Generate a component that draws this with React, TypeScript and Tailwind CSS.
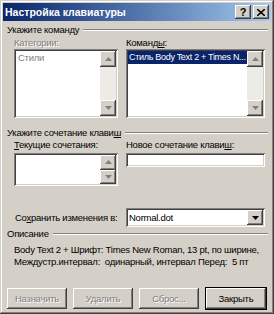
import React from "react";

const FONT = { fontFamily: '"Liberation Sans", Arial, sans-serif' };

const sunken =
  "bg-white shadow-[inset_1px_1px_0_#808080,inset_-1px_-1px_0_#ffffff,inset_2px_2px_0_#404040,inset_-2px_-2px_0_#d4d0c8]";
const raised =
  "bg-[#d4d0c8] shadow-[inset_-1px_-1px_0_#404040,inset_1px_1px_0_#ffffff,inset_-2px_-2px_0_#808080,inset_2px_2px_0_#d4d0c8]";

function Arrow({ down }: { down?: boolean }) {
  return (
    <div className={`w-4 h-4 flex items-center justify-center ${raised}`}>
      <svg width="7" height="4" viewBox="0 0 7 4">
        {down ? (
          <polygon points="0,0 7,0 3.5,4" fill="#808080" />
        ) : (
          <polygon points="0,4 7,4 3.5,0" fill="#808080" />
        )}
      </svg>
    </div>
  );
}

function ScrollBar() {
  return (
    <div className="w-4 flex flex-col justify-between bg-[#ecebe6]">
      <Arrow />
      <Arrow down />
    </div>
  );
}

function Group({ title }: { title: React.ReactNode }) {
  return (
    <div className="flex items-center h-3 gap-1">
      <span className="whitespace-nowrap">{title}</span>
      <div className="flex-1 border-t border-t-[#808080] border-b border-b-white" />
    </div>
  );
}

function Btn({ label, disabled, primary }: { label: string; disabled?: boolean; primary?: boolean }) {
  return (
    <div
      className={`w-[60px] h-[21px] flex items-center justify-center ${
        primary ? "outline outline-1 outline-black" : ""
      } ${raised} ${disabled ? "text-[#808080] [text-shadow:1px_1px_0_#ffffff]" : "text-black"}`}
    >
      {label}
    </div>
  );
}

export default function App() {
  return (
    <div
      style={FONT}
      className="w-[274px] h-[314px] overflow-hidden bg-[#d4d0c8] p-[3px] text-[9.5px] tracking-[-0.25px] leading-3 text-black shadow-[inset_-1px_-1px_0_#404040,inset_1px_1px_0_#d4d0c8,inset_-2px_-2px_0_#808080,inset_2px_2px_0_#ffffff] flex flex-col"
    >
      {/* Title bar */}
      <div className="h-[18px] shrink-0 bg-linear-to-r from-[#0a246a] to-[#a6caf0] flex items-center px-[2px]">
        <span className="flex-1 text-white font-bold text-[10.5px] tracking-normal">Настройка клавиатуры</span>
        <div className={`w-4 h-[14px] flex items-center justify-center font-bold text-[11px] ${raised}`}>?</div>
        <div className={`w-4 h-[14px] ml-[2px] flex items-center justify-center ${raised}`}>
          <svg width="8" height="7" viewBox="0 0 8 7">
            <path d="M0 0 L8 7 M8 0 L0 7" stroke="#000" strokeWidth="1.6" />
          </svg>
        </div>
      </div>

      <div className="flex flex-col pl-1 pr-[3px]">
        <div className="mt-[3px]">
          <Group title="Укажите команду" />
        </div>

        <div className="flex pl-[7px]">
          <div className="w-[104px] flex flex-col">
            <span className="h-3 mt-[1px] text-[#808080] [text-shadow:1px_1px_0_#ffffff]">Категории:</span>
            <div className={`h-[69px] flex p-[2px] ${sunken}`}>
              <div className="flex-1 pl-[2px] pt-[1px] text-[#808080]">Стили</div>
              <ScrollBar />
            </div>
          </div>
          <div className="w-[139px] ml-[8px] flex flex-col">
            <span className="h-3 mt-[1px]">
              Команд<span className="underline">ы</span>:
            </span>
            <div className={`h-[69px] flex p-[2px] ${sunken}`}>
              <div className="flex-1 min-w-0">
                <div className="bg-[#0a246a] text-white h-[13px] leading-[13px] pl-[1px] text-[9px] tracking-[-0.3px] whitespace-nowrap overflow-hidden">
                  Стиль Body Text 2 + Times N...
                </div>
              </div>
              <ScrollBar />
            </div>
          </div>
        </div>

        <div className="mt-[9px]">
          <Group
            title={
              <>
                Укажите сочетание клави<span className="underline">ш</span>
              </>
            }
          />
        </div>

        <div className="flex pl-[7px]">
          <div className="w-[104px] flex flex-col">
            <span className="h-3">
              <span className="underline">Т</span>екущие сочетания:
            </span>
            <div className={`mt-[2px] h-[33px] flex p-[2px] ${sunken}`}>
              <div className="flex-1" />
              <ScrollBar />
            </div>
          </div>
          <div className="w-[139px] ml-[8px] flex flex-col">
            <span className="h-3">
              Новое сочетание клави<span className="underline">ш</span>:
            </span>
            <div className={`mt-[2px] h-[14px] ${sunken}`} />
          </div>
        </div>

        <div className="flex items-center mt-[22px] pl-[7px]">
          <span className="w-[112px] whitespace-nowrap pl-[1px]">
            Со<span className="underline">х</span>ранить изменения в:
          </span>
          <div className={`w-[139px] h-[19px] flex items-center p-[2px] ${sunken}`}>
            <span className="flex-1 pl-[1px]">Normal.dot</span>
            <div className={`w-4 h-[15px] flex items-center justify-center ${raised}`}>
              <svg width="7" height="4" viewBox="0 0 7 4">
                <polygon points="0,0 7,0 3.5,4" fill="#000" />
              </svg>
            </div>
          </div>
        </div>

        <div className="mt-[1px]">
          <Group title="Описание" />
        </div>

        <div className="pl-[7px] mt-[4px] leading-[12px] whitespace-nowrap">
          <div>Body Text 2 + Шрифт: Times New Roman, 13 pt, по ширине,</div>
          <div>Междустр.интервал:&nbsp; одинарный, интервал Перед:&nbsp; 5 пт</div>
        </div>

        <div className="flex mt-[20px] gap-[6px]">
          <Btn label="Назначить" disabled />
          <Btn label="Удалить" disabled />
          <Btn label="Сброс..." disabled />
          <div className="ml-[1px]">
            <Btn label="Закрыть" primary />
          </div>
        </div>
      </div>
    </div>
  );
}
